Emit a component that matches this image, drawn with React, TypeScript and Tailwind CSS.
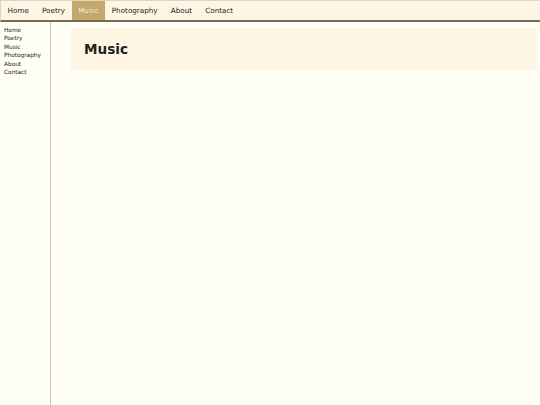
export default function App() {
  const items = ["Home", "Poetry", "Music", "Photography", "About", "Contact"];
  return (
    <div className="w-[540px] h-[405px] bg-[#fffff6] flex flex-col overflow-hidden" style={{ fontFamily: '"DejaVu Sans", sans-serif' }}>
      <div className="h-[22px] shrink-0 flex bg-[#fff5e4] border-t border-l border-[#e3d5bd] border-b-2 border-b-[#7b6b55] text-[7.2px] text-[#222]">
        {items.map((it) => (
          <div
            key={it}
            className={
              it === "Music"
                ? "px-[6.6px] pt-[1px] flex items-center bg-[#c2a86c] text-[#f3ead8]"
                : "px-[6.6px] pt-[1px] flex items-center"
            }
          >
            {it}
          </div>
        ))}
      </div>
      <div className="flex flex-1">
        <div className="w-[51px] shrink-0 border-r border-[#ccc3b5] pl-[4px] pt-[4px] text-[5.8px] leading-[8.4px] text-[#222]">
          {items.map((it) => (
            <div key={it}>{it}</div>
          ))}
        </div>
        <div className="flex-1 pl-[20px] pr-[3px] pt-[6px]">
          <div className="h-[42px] bg-[#fff5e3] flex items-center pl-[13px] pt-[1px]">
            <h1 className="text-[13.6px] font-bold text-[#222]">Music</h1>
          </div>
        </div>
      </div>
    </div>
  );
}
